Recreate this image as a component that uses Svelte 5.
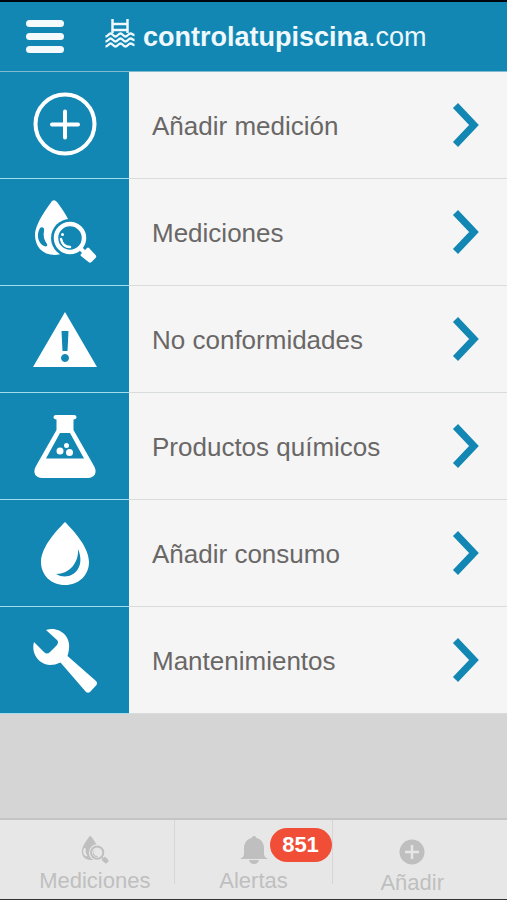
<script>
  const menu = [
    { icon: "add", label: "Añadir medición" },
    { icon: "measure", label: "Mediciones" },
    { icon: "warning", label: "No conformidades" },
    { icon: "flask", label: "Productos químicos" },
    { icon: "drop", label: "Añadir consumo" },
    { icon: "wrench", label: "Mantenimientos" },
  ];
</script>

{#snippet measureIcon(id)}
  <mask {id} maskUnits="userSpaceOnUse" x="0" y="0" width="64" height="64">
    <rect width="64" height="64" fill="#fff" />
    <circle cx="37" cy="38" r="19" fill="#000" />
    <path d="M7 28c-4 7-2 15 4 18 2 1 4 0 3-2-3-4-4-8-3-13 1-3-2-5-4-3z" fill="#000" />
  </mask>
  <path
    mask="url(#{id})"
    d="M19 1q2.500-2 5 1C29 9 38 20 40 34c0 12-7 21-18 21C9 55 2 46 2 35 2 24 14 8 19 1z"
    fill="currentColor"
  />
  <circle cx="37" cy="38" r="14" fill="none" stroke="currentColor" stroke-width="4.500" />
  <path d="M28 39c1 5 4 8 9 8" fill="none" stroke="currentColor" stroke-width="2.500" stroke-linecap="round" />
  <circle cx="29.500" cy="34.500" r="1.500" fill="currentColor" />
  <path d="M47 48l5 5" stroke="currentColor" stroke-width="4" />
  <path d="M48 54l6-6q1-1 2 0l6.500 7q1.500 1.500 0 3l-4 4q-1.500 1.500-3 0l-7.500-6q-1-1 0-2z" fill="currentColor" />
{/snippet}

<div class="page">
  <header>
    <button class="burger" aria-label="Menú">
      <span></span>
      <span></span>
      <span></span>
    </button>
    <a class="brand" href="/">
      <svg viewBox="0 0 30 30" width="30" height="30" aria-hidden="true">
        <g fill="none" stroke="currentColor" stroke-width="2.300">
          <path d="M7.500 0v14M22.500 0v14" stroke-width="2.500" />
          <path d="M7 5h16M7 11h16" />
          <path d="M0.500 17.500c3 0 3-3 5-3s3 3 5 3 3-3 5-3 3 3 5 3 3-3 5-3 2 1.500 4 1.500" />
          <path d="M0.500 22.500c3 0 3-3 5-3s3 3 5 3 3-3 5-3 3 3 5 3 3-3 5-3 2 1.500 4 1.500" />
          <path d="M0.500 27.500c3 0 3-3 5-3s3 3 5 3 3-3 5-3 3 3 5 3 3-3 5-3 2 1.500 4 1.500" />
        </g>
      </svg>
      <span><b>controlatupiscina</b>.com</span>
    </a>
  </header>

  <main>
    <ul>
      {#each menu as item}
        <li>
          <a class="row" href="#{item.icon}">
            <span class="tile">
              <svg viewBox="0 0 64 64" width="64" height="64" aria-hidden="true">
                {#if item.icon === "add"}
                  <circle cx="32" cy="31" r="29.500" fill="none" stroke="currentColor" stroke-width="4" />
                  <path d="M32 18.500v26M19 31.500h26" stroke="currentColor" stroke-width="4" stroke-linecap="round" />
                {:else if item.icon === "measure"}
                  {@render measureIcon("lens-row")}
                {:else if item.icon === "warning"}
                  <path
                    fill="currentColor"
                    fill-rule="evenodd"
                    d="M32 5L64 60H0zM28.500 24l1 20h5l1-20zM32 47a4 4 0 1 0 .01 0z"
                  />
                {:else if item.icon === "flask"}
                  <path
                    fill="currentColor"
                    fill-rule="evenodd"
                    d="M23 1h18q2.500 0 2.500 2t-3 2.500V16L61 52c4 7 0 12-6 12H9c-6 0-10-5-6-12L23.500 16V5.500q-3-.5-3-2.500T23 1zM27 19L13 44.500h38L37 19z"
                  />
                  <g fill="currentColor">
                    <circle cx="27" cy="37" r="3.500" />
                    <circle cx="36.500" cy="38.500" r="3.500" />
                    <circle cx="33.500" cy="31.500" r="2.500" />
                  </g>
                {:else if item.icon === "drop"}
                  <path
                    fill="currentColor"
                    fill-rule="evenodd"
                    d="M32 1C40 9 56 26 56 41c0 13-10 23-24 23S8 54 8 41C8 26 24 9 32 1zM45 28C46 41 37 53 23 53C36 61 54 49 45 28z"
                  />
                {:else}
                  <path
                    fill="currentColor"
                    d="M13 2C26-2 38 8 36 21q-.5 4-1.500 7L63 53q2 2 .5 4L57 64q-2 1.500-4 0L27.500 34.500Q22 37 17 37C5 36-2 25 1 14l10 10q3 3 6 0l7-7q2-3 0-5z"
                  />
                {/if}
              </svg>
            </span>
            <span class="label">{item.label}</span>
            <svg class="chevron" viewBox="0 0 26 44" width="26" height="44" aria-hidden="true">
              <path d="M2.500 2.500L21 22 2.500 41.500" fill="none" stroke="currentColor" stroke-width="7" />
            </svg>
          </a>
        </li>
      {/each}
    </ul>
  </main>

  <nav>
    <a class="tab" href="#mediciones">
      <svg viewBox="0 0 64 64" width="28" height="28" aria-hidden="true">
        {@render measureIcon("lens-tab")}
      </svg>
      <span>Mediciones</span>
    </a>
    <a class="tab middle" href="#alertas">
      <span class="bell">
        <svg viewBox="0 0 28 28" width="28" height="28" aria-hidden="true">
          <path
            fill="currentColor"
            d="M14 0q2 0 2.500 2C21 3 24 7 24 12v6q0 3 4 5H0q4-2 4-5v-6c0-5 3-9 7.500-10Q12 0 14 0zM9 24h10q-1 4-5 4t-5-4z"
          />
        </svg>
        <span class="badge">851</span>
      </span>
      <span>Alertas</span>
    </a>
    <a class="tab low" href="#anadir">
      <svg viewBox="0 0 28 28" width="28" height="28" aria-hidden="true">
        <circle cx="14" cy="14" r="12.500" fill="currentColor" />
        <path d="M14 7v14M7 14h14" stroke="#e7e7e7" stroke-width="2.500" />
      </svg>
      <span>Añadir</span>
    </a>
  </nav>
</div>

<style>
  :global(body) {
    margin: 0;
    background: #d5d5d5;
  }

  .page {
    display: flex;
    flex-direction: column;
    min-height: 100vh;
    box-sizing: border-box;
    border-top: 2px solid #00060c;
    border-bottom: 1px solid #333;
    font-family: "Liberation Sans", Arial, sans-serif;
  }

  a {
    color: inherit;
    text-decoration: none;
  }

  svg {
    overflow: visible;
  }

  header {
    display: flex;
    align-items: center;
    height: 69px;
    padding: 0 26px;
    gap: 41px;
    color: #eef8fd;
    background: #1287b3;
    border-bottom: 1px solid #7fbbd1;
  }

  .burger {
    display: flex;
    flex-direction: column;
    gap: 6px;
    width: 38px;
    padding: 0;
    border: 0;
    background: none;
    cursor: pointer;
  }

  .burger span {
    height: 7px;
    border-radius: 4px;
    background: #f4fafc;
  }

  .brand {
    display: flex;
    align-items: center;
    gap: 8px;
    padding-bottom: 6px;
    font-size: 27px;
    line-height: 30px;
  }

  .brand span {
    padding-top: 6px;
  }

  main {
    flex: 1;
  }

  ul {
    margin: 0;
    padding: 0;
    list-style: none;
  }

  .row {
    display: flex;
    align-items: center;
    height: 106px;
    padding-right: 28px;
    background: #f5f5f5;
    border-bottom: 1px solid #d9dcdd;
  }

  .tile {
    display: flex;
    align-items: center;
    justify-content: center;
    width: 129px;
    height: 107px;
    margin-bottom: -1px;
    box-sizing: border-box;
    color: #fff;
    background: #1287b3;
    border-bottom: 1px solid #a3dcec;
  }

  .label {
    flex: 1;
    padding: 2px 0 0 23px;
    color: #6a6767;
    font-size: 26px;
    line-height: 30px;
  }

  .chevron {
    color: #1287b3;
  }

  nav {
    display: flex;
    height: 79px;
    padding: 0 16px;
    color: #bfbfbf;
    background: #e7e7e7;
    border-top: 2px solid #c4c4c4;
  }

  .tab {
    display: flex;
    flex: 1;
    flex-direction: column;
    align-items: center;
    gap: 4px;
    padding-top: 16px;
    font-size: 22px;
    line-height: 26px;
  }

  .middle {
    margin-bottom: 15px;
    border-left: 1px solid #d6d6d6;
    border-right: 1px solid #d6d6d6;
  }

  .low {
    padding-top: 18px;
  }

  .bell {
    position: relative;
    height: 28px;
  }

  .badge {
    position: absolute;
    top: -8px;
    left: 30px;
    width: 62px;
    border-radius: 17px;
    color: #fff;
    background: #f04e37;
    font-size: 22px;
    font-weight: bold;
    line-height: 34px;
    text-align: center;
  }
</style>
